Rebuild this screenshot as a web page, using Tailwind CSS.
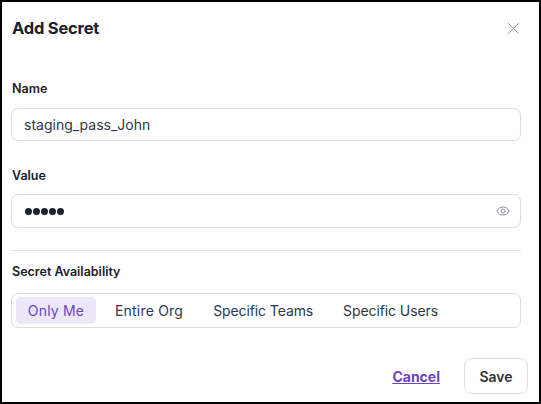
<!doctype html>
<html><head><meta charset="utf-8"><script src="https://cdn.jsdelivr.net/npm/@tailwindcss/browser@4"></script></head>
<body class="m-0 bg-white">
<div class="w-[541px] h-[404px] border-2 border-black bg-white font-['Inter',sans-serif] text-[#1a202c] overflow-hidden">
  <div class="flex items-center justify-between pl-[10px] pr-[19px] pt-[12px] h-[41px]">
    <h2 class="text-[16.5px] leading-5 font-bold tracking-[-0.2px] -mt-px">Add Secret</h2>
    <svg class="w-[13px] h-[13px] text-[#9a9ea6]" viewBox="0 0 13 13" fill="none" stroke="currentColor" stroke-width="1"><path d="M1 1l11 11M12 1L1 12"/></svg>
  </div>
  <div class="pl-[9px] pr-[18px] pt-[38px]">
    <label class="block ml-px text-[12.5px] leading-4 font-semibold">Name</label>
    <div class="mt-[11px] h-[33px] rounded-[7px] border border-[#dcdcdc] flex items-center px-[12px] text-[14px] text-[#2d3748]">staging_pass_John</div>
    <label class="block ml-px mt-[27px] text-[12.5px] leading-4 font-semibold">Value</label>
    <div class="mt-[10px] h-[34px] rounded-[7px] border border-[#dcdcdc] flex items-center justify-between pl-[13px] pr-[10px]">
      <span class="flex gap-[1px]"><i class="block w-[7px] h-[7px] rounded-full bg-[#1a202c]"></i><i class="block w-[7px] h-[7px] rounded-full bg-[#1a202c]"></i><i class="block w-[7px] h-[7px] rounded-full bg-[#1a202c]"></i><i class="block w-[7px] h-[7px] rounded-full bg-[#1a202c]"></i><i class="block w-[7px] h-[7px] rounded-full bg-[#1a202c]"></i></span>
      <svg class="w-[14px] h-[14px] text-[#8a8f98]" viewBox="0 0 14 14" fill="none" stroke="currentColor" stroke-width="1"><path d="M.8 7C2.2 4.400 4.400 3 7 3s4.800 1.400 6.200 4C11.800 9.600 9.600 11 7 11S2.200 9.600.8 7z"/><circle cx="7" cy="7" r="2"/></svg>
    </div>
    <div class="mt-[22px] h-px bg-[#e5e5e5]"></div>
    <label class="block ml-px mt-[13px] text-[12.5px] leading-4 font-semibold">Secret Availability</label>
    <div class="mt-[13px] h-[35px] rounded-[7px] border border-[#dcdcdc] flex items-center pl-[4px] text-[14px] text-[#2d3748]">
      <span class="h-[27px] w-[80px] rounded-[5px] bg-[#ece8f9] text-[#6b46c1] flex items-center justify-center tracking-[0.2px]">Only Me</span>
      <span class="ml-[19px] tracking-[0.2px]">Entire Org</span>
      <span class="ml-[30px] tracking-[-0.1px]">Specific Teams</span>
      <span class="ml-[30px] tracking-[-0.1px]">Specific Users</span>
    </div>
    <div class="mt-[30px] flex items-center justify-end gap-[24px] -mr-[7px]">
      <a class="text-[14px] font-bold text-[#6b46c1] underline">Cancel</a>
      <button class="w-[64px] h-[36px] rounded-[8px] border border-[#dcdcdc] text-[14px] font-semibold text-[#333]">Save</button>
    </div>
  </div>
</div>
</body></html>
